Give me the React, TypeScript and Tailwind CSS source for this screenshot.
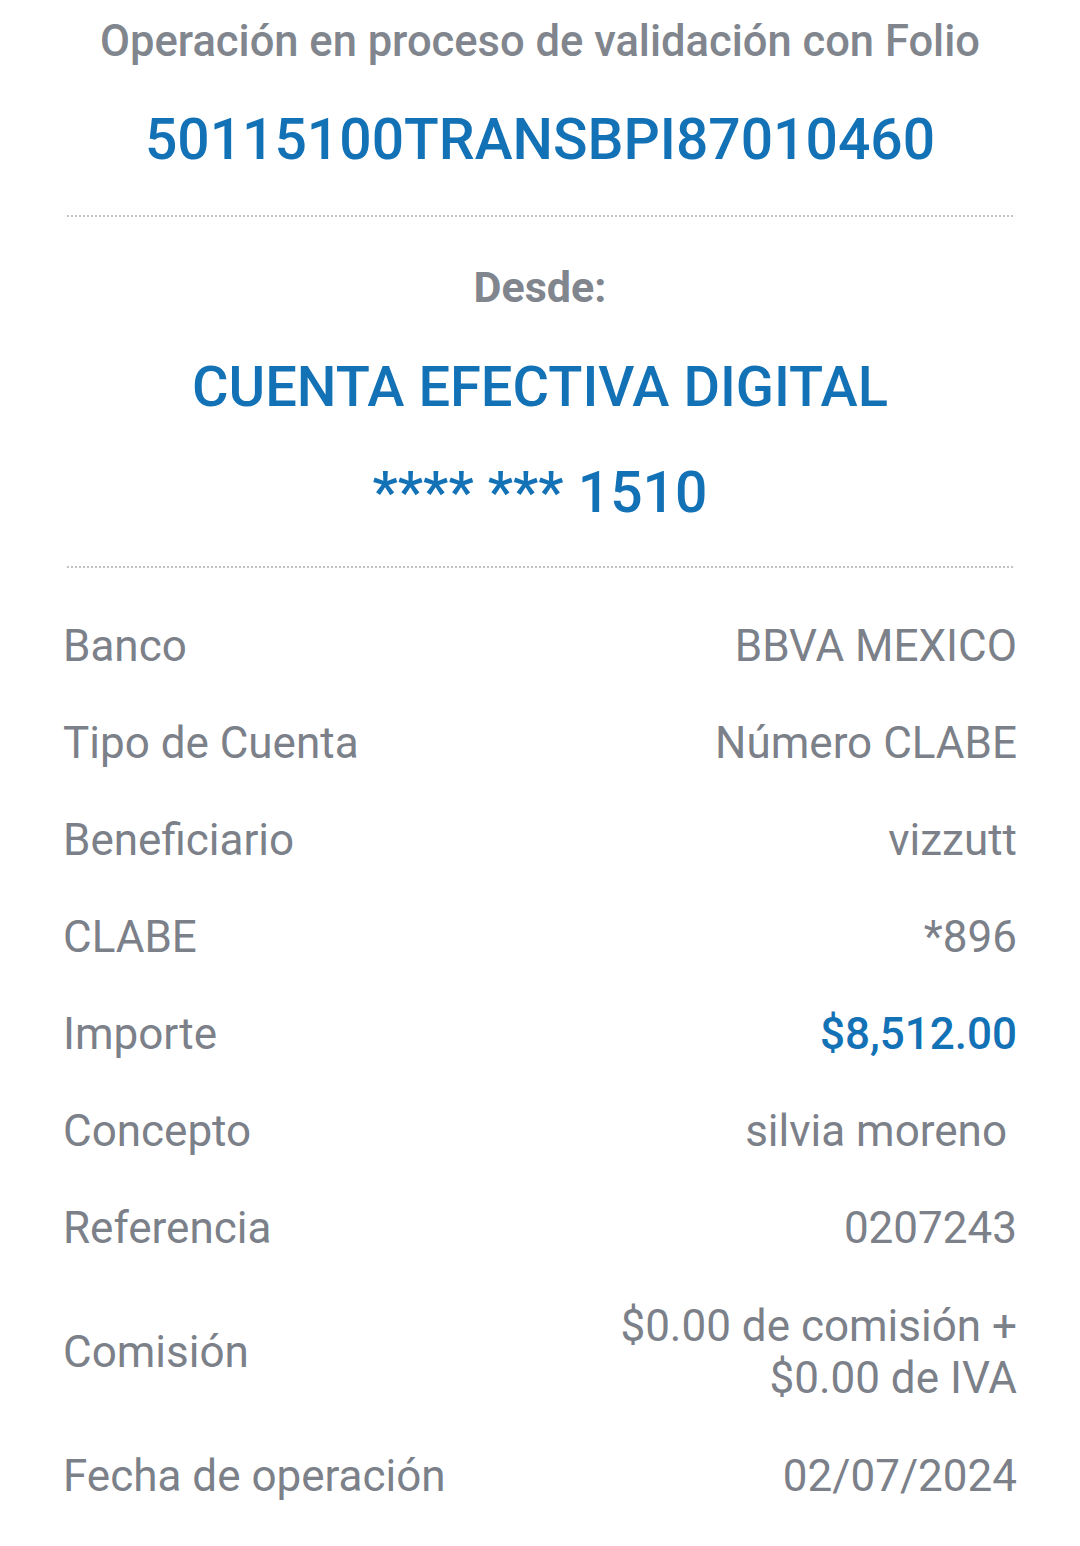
import React from 'react';

const ROWS = [
  { label: 'Banco', value: 'BBVA MEXICO' },
  { label: 'Tipo de Cuenta', value: 'Número CLABE' },
  { label: 'Beneficiario', value: 'vizzutt' },
  { label: 'CLABE', value: '*896' },
  { label: 'Importe', value: '$8,512.00', blue: true },
  { label: 'Concepto', value: 'silvia moreno', pad: true },
  { label: 'Referencia', value: '0207243' },
];

function Dotted() {
  return <div className="mx-[67px] h-0 border-t-2 border-dotted border-[#bfc2c6]" />;
}

export default function App() {
  return (
    <div className="w-[1080px] h-[1546px] bg-white font-['Roboto',sans-serif] text-[#7b8089]">
      {/* header */}
      <div className="flex flex-col items-center pt-[16px]">
        <div className="text-[43.5px] leading-[52px] font-medium text-[#81868e]">
          Operación en proceso de validación con Folio
        </div>
        <div className="mt-[40px] text-[57px] leading-[64px] font-medium text-[#1371b6]">
          50115100TRANSBPI87010460
        </div>
      </div>
      <div className="mt-[43px]">
        <Dotted />
      </div>

      {/* origen */}
      <div className="flex flex-col items-center pt-[45px]">
        <div className="text-[43px] leading-[50px] font-bold text-[#81868e]">Desde:</div>
        <div className="mt-[43px] text-[56px] leading-[64px] font-medium text-[#1371b6]">
          CUENTA EFECTIVA DIGITAL
        </div>
        <div className="mt-[42px] text-[57px] leading-[64px] font-medium text-[#1371b6]">
          **** *** 1510
        </div>
      </div>
      <div className="mt-[41px]">
        <Dotted />
      </div>

      {/* detalle */}
      <div className="flex flex-col px-[63px] pt-[29px] text-[44px] leading-[52px]">
        {ROWS.map((r) => (
          <div key={r.label} className="flex items-center justify-between h-[97px]">
            <span>{r.label}</span>
            <span className={r.blue ? 'font-medium text-[#1371b6]' : r.pad ? 'pr-[10px]' : ''}>{r.value}</span>
          </div>
        ))}
        <div className="flex items-center justify-between h-[151px]">
          <span>Comisión</span>
          <span className="text-right">
            $0.00 de comisión +
            <br />
            $0.00 de IVA
          </span>
        </div>
        <div className="flex items-center justify-between h-[97px]">
          <span>Fecha de operación</span>
          <span>02/07/2024</span>
        </div>
      </div>
    </div>
  );
}
